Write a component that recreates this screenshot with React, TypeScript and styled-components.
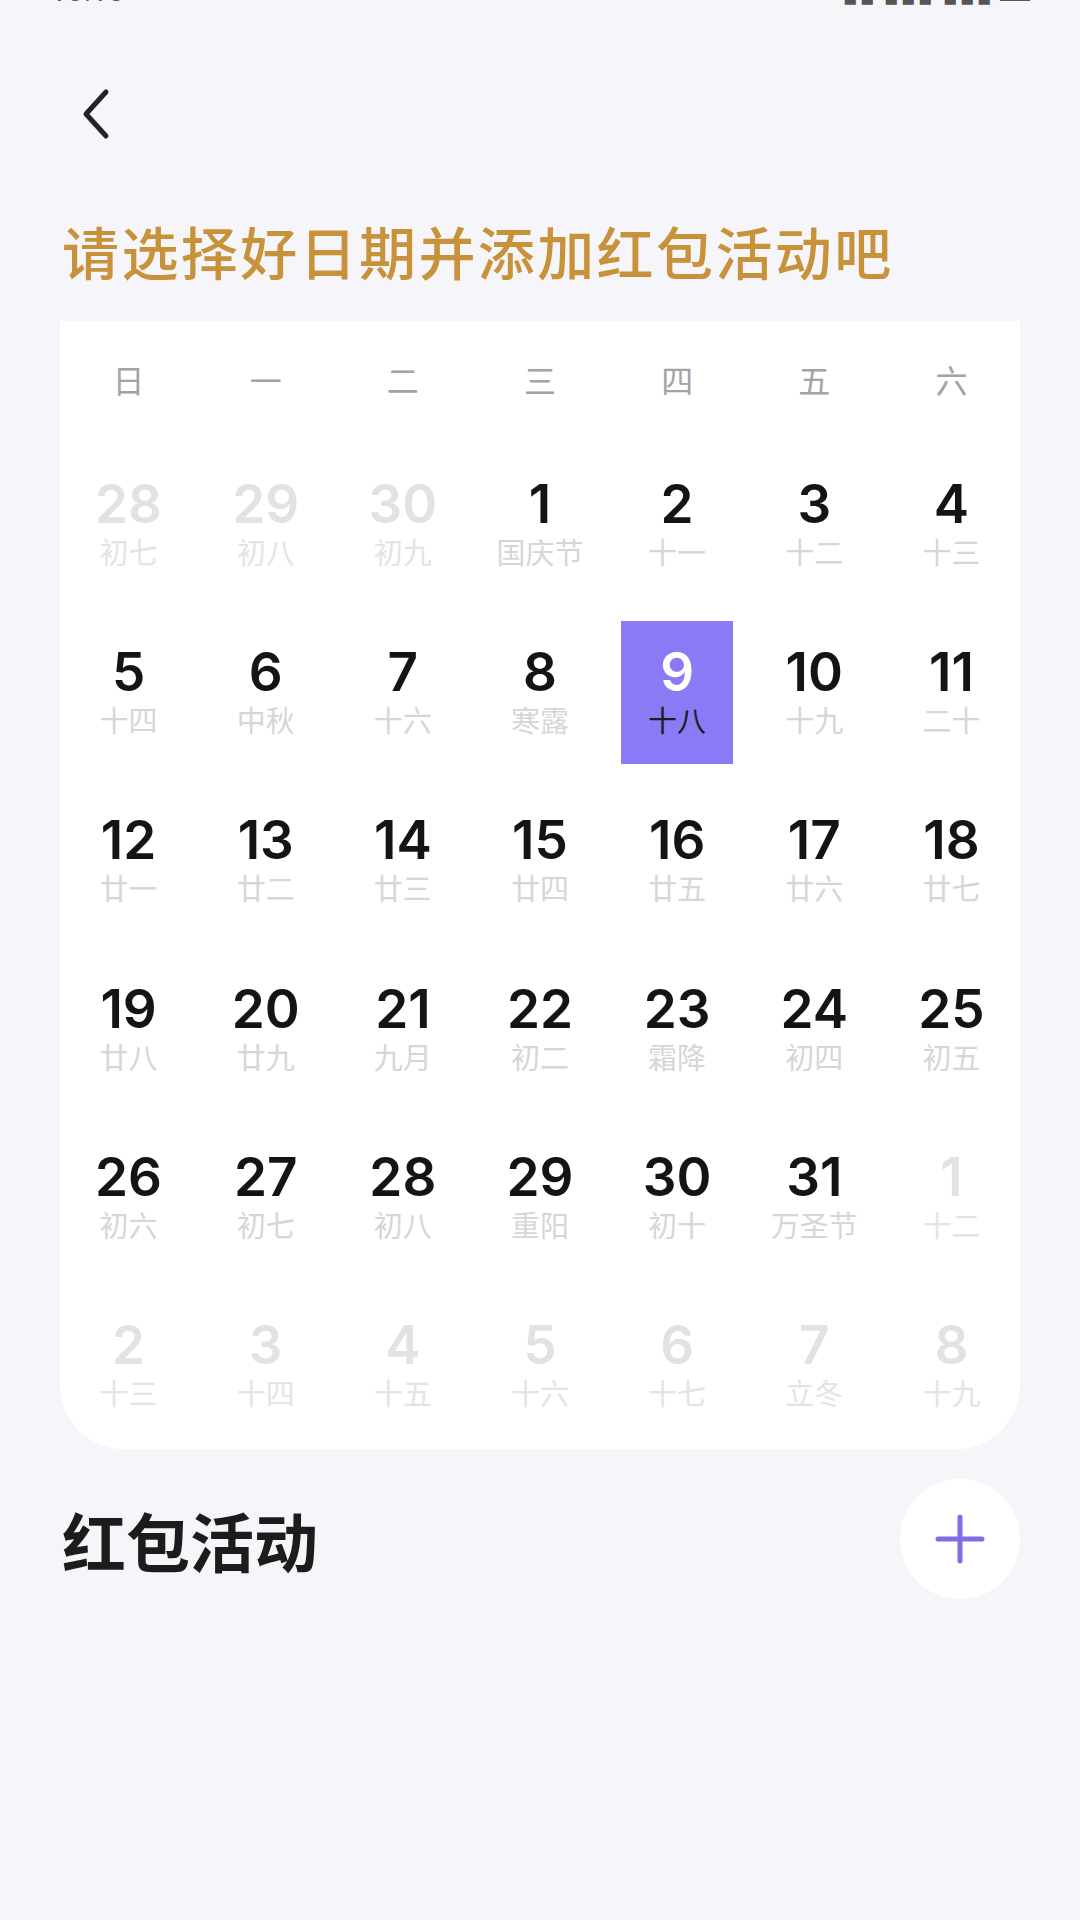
import { createGlobalStyle, styled } from "styled-components";

const GlobalStyle = createGlobalStyle`
    html, body {
        margin: 0;
        padding: 0;
        background: #f6f6fa;
    }
    body {
        font-family: "Noto Sans CJK SC", "Noto Sans", sans-serif;
    }
`;

const Page = styled.div`
    width: 1080px;
    min-height: 1920px;
    background: #f6f6fa;
    display: flex;
    flex-direction: column;
`;

const StatusBar = styled.div`
    height: 6px;
    overflow: hidden;
    display: flex;
    justify-content: space-between;
    padding: 0 50px;
    color: #555;
    font-family: Roboto, sans-serif;
    font-size: 30px;
    line-height: 30px;
    & > span {
        margin-top: -24px;
    }
`;

const Header = styled.div`
    padding: 80px 0 0 78px;
    height: 62px;
`;

const BackButton = styled.button`
    background: none;
    border: 0;
    padding: 0;
    width: 36px;
    height: 56px;
    cursor: pointer;
`;

const Title = styled.h1`
    margin: 70px 0 0 62px;
    font-size: 57px;
    line-height: 64px;
    font-weight: 500;
    letter-spacing: 2.4px;
    color: #c8923a;
`;

const Card = styled.div`
    margin: 39px 60px 0 60px;
    background: #ffffff;
    border-radius: 0 0 64px 64px;
    padding: 38px 0 11px 0;
`;

const WeekRow = styled.div`
    display: grid;
    grid-template-columns: repeat(7, 1fr);
    margin-bottom: 54px;
`;

const WeekDay = styled.div`
    text-align: center;
    font-size: 32px;
    line-height: 40px;
    color: #a3a3a3;
`;

const DateGrid = styled.div`
    display: grid;
    grid-template-columns: repeat(7, 1fr);
    row-gap: 25.4px;
`;

const Cell = styled.div<{ $selected?: boolean }>`
    justify-self: center;
    box-sizing: border-box;
    width: 112px;
    height: 143px;
    padding-bottom: 12px;
    display: flex;
    flex-direction: column;
    align-items: center;
    justify-content: center;
    background: ${(p) => (p.$selected ? "#8a7af5" : "transparent")};
`;

const DayNum = styled.span<{ $muted?: boolean; $selected?: boolean }>`
    font-family: Inter, Roboto, sans-serif;
    font-size: 53px;
    line-height: 64px;
    font-weight: 600;
    color: ${(p) => (p.$selected ? "#ffffff" : p.$muted ? "#e2e2e2" : "#141414")};
`;

const Lunar = styled.span<{ $muted?: boolean; $selected?: boolean }>`
    font-size: 29px;
    line-height: 30px;
    color: ${(p) => (p.$selected ? "#1e1e1e" : p.$muted ? "#e4e4e4" : "#d6d6d6")};
`;

const ActivityRow = styled.div`
    margin: 30px 60px 0 62px;
    display: flex;
    align-items: center;
    justify-content: space-between;
`;

const ActivityTitle = styled.h2`
    margin: 0;
    font-size: 64px;
    line-height: 70px;
    font-weight: 700;
    color: #1c1c1c;
`;

const AddButton = styled.button`
    width: 120px;
    height: 120px;
    border-radius: 50%;
    border: 0;
    background: #ffffff;
    display: flex;
    align-items: center;
    justify-content: center;
    cursor: pointer;
`;

const weekDays = ["日", "一", "二", "三", "四", "五", "六"];

type Day = { n: number; lunar: string; muted?: boolean; selected?: boolean };

const days: Day[] = [
    { n: 28, lunar: "初七", muted: true },
    { n: 29, lunar: "初八", muted: true },
    { n: 30, lunar: "初九", muted: true },
    { n: 1, lunar: "国庆节" },
    { n: 2, lunar: "十一" },
    { n: 3, lunar: "十二" },
    { n: 4, lunar: "十三" },
    { n: 5, lunar: "十四" },
    { n: 6, lunar: "中秋" },
    { n: 7, lunar: "十六" },
    { n: 8, lunar: "寒露" },
    { n: 9, lunar: "十八", selected: true },
    { n: 10, lunar: "十九" },
    { n: 11, lunar: "二十" },
    { n: 12, lunar: "廿一" },
    { n: 13, lunar: "廿二" },
    { n: 14, lunar: "廿三" },
    { n: 15, lunar: "廿四" },
    { n: 16, lunar: "廿五" },
    { n: 17, lunar: "廿六" },
    { n: 18, lunar: "廿七" },
    { n: 19, lunar: "廿八" },
    { n: 20, lunar: "廿九" },
    { n: 21, lunar: "九月" },
    { n: 22, lunar: "初二" },
    { n: 23, lunar: "霜降" },
    { n: 24, lunar: "初四" },
    { n: 25, lunar: "初五" },
    { n: 26, lunar: "初六" },
    { n: 27, lunar: "初七" },
    { n: 28, lunar: "初八" },
    { n: 29, lunar: "重阳" },
    { n: 30, lunar: "初十" },
    { n: 31, lunar: "万圣节" },
    { n: 1, lunar: "十二", muted: true },
    { n: 2, lunar: "十三", muted: true },
    { n: 3, lunar: "十四", muted: true },
    { n: 4, lunar: "十五", muted: true },
    { n: 5, lunar: "十六", muted: true },
    { n: 6, lunar: "十七", muted: true },
    { n: 7, lunar: "立冬", muted: true },
    { n: 8, lunar: "十九", muted: true },
];

export default function App() {
    return <>
        <GlobalStyle />
        <Page>
            <StatusBar>
                <span>10:10</span>
                <span>▮▮ ▮▮▮ ▮▮▮ ▬</span>
            </StatusBar>
            <Header>
                <BackButton aria-label="back">
                    <svg width="36" height="56" viewBox="0 0 36 56">
                        <path d="M28 6 L8 28 L28 50" fill="none" stroke="#232323" strokeWidth="5" strokeLinecap="round" strokeLinejoin="round" />
                    </svg>
                </BackButton>
            </Header>
            <Title>请选择好日期并添加红包活动吧</Title>
            <Card>
                <WeekRow>
                    {weekDays.map((d) => <WeekDay key={d}>{d}</WeekDay>)}
                </WeekRow>
                <DateGrid>
                    {days.map((d, i) => (
                        <Cell key={i} $selected={d.selected}>
                            <DayNum $muted={d.muted} $selected={d.selected}>{d.n}</DayNum>
                            <Lunar $muted={d.muted} $selected={d.selected}>{d.lunar}</Lunar>
                        </Cell>
                    ))}
                </DateGrid>
            </Card>
            <ActivityRow>
                <ActivityTitle>红包活动</ActivityTitle>
                <AddButton aria-label="add">
                    <svg width="50" height="50" viewBox="0 0 50 50">
                        <path d="M25 3 V47 M3 25 H47" stroke="#7f6ee8" strokeWidth="5" strokeLinecap="round" />
                    </svg>
                </AddButton>
            </ActivityRow>
        </Page>
    </>
}
